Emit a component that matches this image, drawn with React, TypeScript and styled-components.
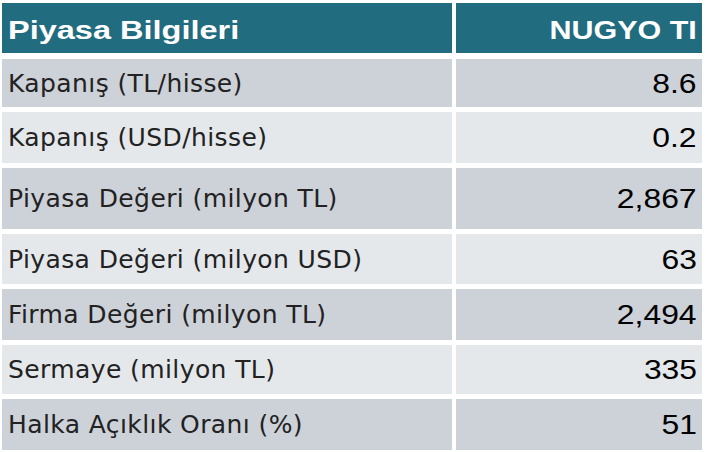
import React from "react";
import styled, { createGlobalStyle } from "styled-components";

const Global = createGlobalStyle`
  html, body { margin: 0; padding: 0; background: #ffffff; }
  body { width: 706px; height: 452px; overflow: hidden; }
`;

const Page = styled.div`
  padding: 3px 0 0 2px;
`;

const Table = styled.div`
  width: 700px;
  display: flex;
  flex-direction: column;
  gap: 5px;
`;

const Row = styled.div<{ $h: number; $head?: boolean }>`
  display: grid;
  grid-template-columns: 450px 246px;
  column-gap: 4px;
  height: ${(p) => p.$h}px;
  margin-bottom: ${(p) => (p.$head ? 1 : 0)}px;
`;

type Tone = "head" | "dark" | "light";

const toneBg: Record<Tone, string> = {
  head: "#226c7f",
  dark: "#cdd1d8",
  light: "#e5e8eb",
};

const Cell = styled.div<{ $tone: Tone; $right?: boolean }>`
  background: ${(p) => toneBg[p.$tone]};
  display: flex;
  align-items: center;
  justify-content: ${(p) => (p.$right ? "flex-end" : "flex-start")};
  padding: ${(p) => (p.$right ? "0 5px 0 0" : "0 0 0 6px")};
  overflow: hidden;
  white-space: nowrap;
`;

const HeadText = styled.span<{ $right?: boolean }>`
  display: inline-block;
  font-family: "Liberation Sans", Arial, sans-serif;
  font-weight: 700;
  font-size: 25px;
  color: #ffffff;
  transform: scaleX(${(p) => (p.$right ? 1.22 : 1.3)});
  transform-origin: ${(p) => (p.$right ? "right" : "left")} center;
  position: relative;
  top: 2px;
`;

const Label = styled.span`
  font-family: "DejaVu Sans", sans-serif;
  font-size: 25px;
  letter-spacing: 0.4px;
  color: #222222;
  position: relative;
  top: 0px;
`;

const Value = styled.span`
  display: inline-block;
  font-family: "Liberation Sans", Arial, sans-serif;
  font-size: 27px;
  color: #000000;
  transform: scaleX(1.18);
  transform-origin: right center;
  position: relative;
  top: 1px;
`;

const rows: { label: string; value: string; h: number; tone: Tone }[] = [
  { label: "Kapanış (TL/hisse)", value: "8.6", h: 48, tone: "dark" },
  { label: "Kapanış (USD/hisse)", value: "0.2", h: 51, tone: "light" },
  { label: "Piyasa Değeri (milyon TL)", value: "2,867", h: 61, tone: "dark" },
  { label: "Piyasa Değeri (milyon USD)", value: "63", h: 50, tone: "light" },
  { label: "Firma Değeri (milyon TL)", value: "2,494", h: 51, tone: "dark" },
  { label: "Sermaye (milyon TL)", value: "335", h: 49, tone: "light" },
  { label: "Halka Açıklık Oranı (%)", value: "51", h: 51, tone: "dark" },
];

export default function App() {
  return (
    <>
      <Global />
      <Page>
        <Table>
          <Row $h={50} $head>
            <Cell $tone="head">
              <HeadText>Piyasa Bilgileri</HeadText>
            </Cell>
            <Cell $tone="head" $right>
              <HeadText $right>NUGYO TI</HeadText>
            </Cell>
          </Row>
          {rows.map((r) => (
            <Row key={r.label} $h={r.h}>
              <Cell $tone={r.tone}>
                <Label>{r.label}</Label>
              </Cell>
              <Cell $tone={r.tone} $right>
                <Value>{r.value}</Value>
              </Cell>
            </Row>
          ))}
        </Table>
      </Page>
    </>
  );
}
